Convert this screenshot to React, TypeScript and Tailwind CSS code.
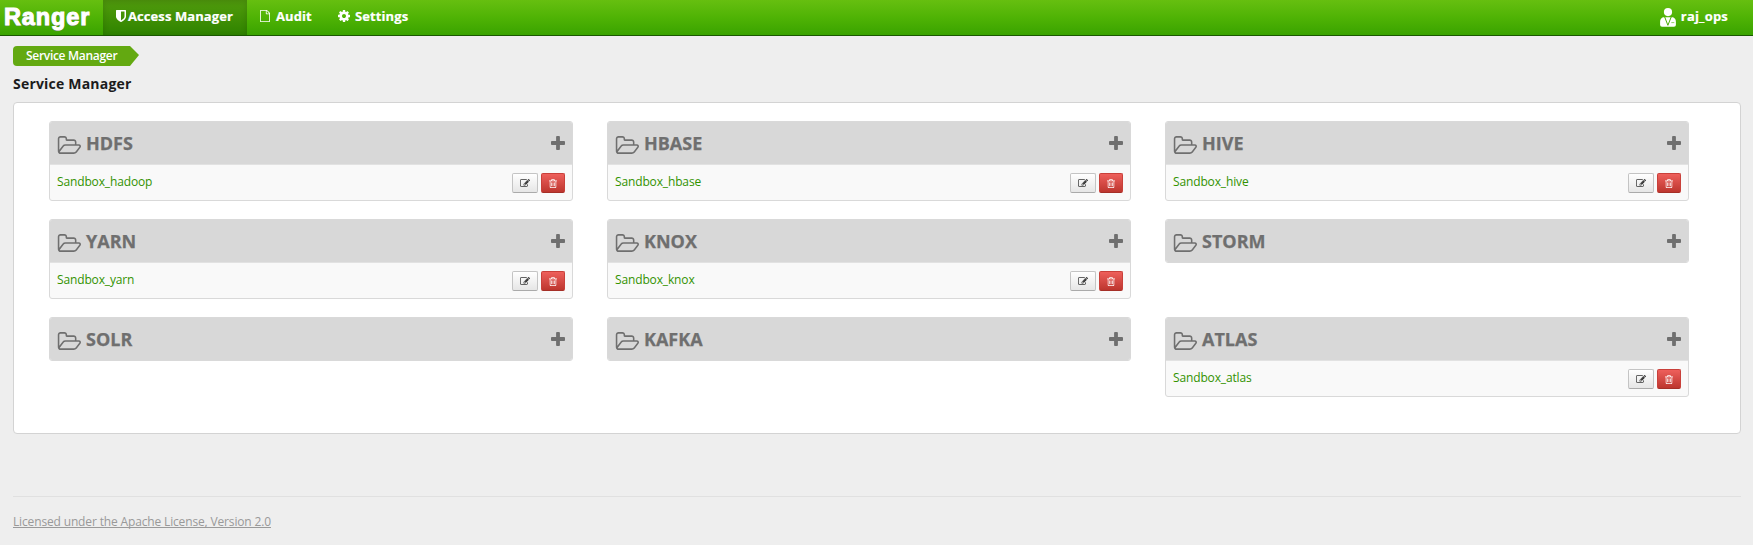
import React from "react";

const PATHS = {
  folder:
    "M1845 931q0-35-53-35h-1088q-40 0-85.500 21.500t-71.500 52.500l-294 363q-18 24-18 40 0 35 53 35h1088q40 0 86-22t71-53l294-363q18-22 18-39zm-1141-163h768v-160q0-40-28-68t-68-28h-576q-40 0-68-28t-28-68v-64q0-40-28-68t-68-28h-320q-40 0-68 28t-28 68v853l256-315q44-53 116-87.500t140-34.500zm1269 163q0 62-46 120l-295 363q-43 53-116 87.500t-140 34.500h-1088q-92 0-158-66t-66-158v-960q0-92 66-158t158-66h320q92 0 158 66t66 158v32h544q92 0 158 66t66 158v160h192q54 0 99 24.500t67 70.500q15 32 15 68z",
  plus: "M1600 736v192q0 40-28 68t-68 28h-416v416q0 40-28 68t-68 28h-192q-40 0-68-28t-28-68v-416h-416q-40 0-68-28t-28-68v-192q0-40 28-68t68-28h416v-416q0-40 28-68t68-28h192q40 0 68 28t28 68v416h416q40 0 68 28t28 68z",
  edit: "M888 1184l116-116-152-152-116 116v56h96v96h56zm440-720q-16-16-33 1l-350 350q-17 17-1 33t33-1l350-350q17-17 1-33zm80 594v190q0 119-84.500 203.500t-203.500 84.500h-832q-119 0-203.500-84.500t-84.500-203.500v-832q0-119 84.500-203.500t203.500-84.500h832q63 0 117 25 15 7 18 23 3 17-9 29l-49 49q-14 14-32 8-23-6-45-6h-832q-66 0-113 47t-47 113v832q0 66 47 113t113 47h832q66 0 113-47t47-113v-126q0-13 9-22l64-64q15-15 35-7t20 29zm-96-738l288 288-672 672h-288v-288zm444 132l-92 92-288-288 92-92q28-28 68-28t68 28l152 152q28 28 28 68t-28 68z",
  trash:
    "M704 736v576q0 14-9 23t-23 9h-64q-14 0-23-9t-9-23v-576q0-14 9-23t23-9h64q14 0 23 9t9 23zm256 0v576q0 14-9 23t-23 9h-64q-14 0-23-9t-9-23v-576q0-14 9-23t23-9h64q14 0 23 9t9 23zm256 0v576q0 14-9 23t-23 9h-64q-14 0-23-9t-9-23v-576q0-14 9-23t23-9h64q14 0 23 9t9 23zm128 724v-948h-896v948q0 22 7 40.500t14.500 27 10.500 8.500h832q3 0 10.500-8.500t14.500-27 7-40.500zm-672-1076h448l-48-117q-7-9-17-11h-317q-10 2-17 11zm928 32v64q0 14-9 23t-23 9h-96v948q0 83-47 143.500t-113 60.500h-832q-66 0-113-58.500t-47-141.500v-952h-96q-14 0-23-9t-9-23v-64q0-14 9-23t23-9h309l70-167q15-37 54-63t79-26h320q40 0 79 26t54 63l70 167h309q14 0 23 9t9 23z",
  cog: "M1152 896q0-106-75-181t-181-75-181 75-75 181 75 181 181 75 181-75 75-181zm512-109v222q0 12-8 23t-20 13l-185 28q-19 54-39 91 35 50 107 138 10 12 10 25t-9 23q-27 37-99 108t-94 71q-12 0-26-9l-138-108q-44 23-91 38-16 136-29 186-7 28-36 28h-222q-14 0-24.500-8.500t-11.500-21.500l-28-184q-49-16-90-37l-141 107q-10 9-25 9-14 0-25-11-126-114-165-168-7-10-7-23 0-12 8-23 15-21 51-66.500t54-70.500q-27-50-41-99l-183-27q-13-2-21-12.500t-8-23.500v-222q0-12 8-23t19-13l186-28q14-46 39-92-40-57-107-138-10-12-10-24 0-10 9-23 26-36 98.500-107.500t94.500-71.500q13 0 26 10l138 107q44-23 91-38 16-136 29-186 7-28 36-28h222q14 0 24.500 8.500t11.500 21.500l28 184q49 16 90 37l142-107q9-9 24-9 13 0 25 10 129 119 165 170 7 8 7 22 0 12-8 23-15 21-51 66.500t-54 70.500q26 50 41 98l183 28q13 2 21 12.500t8 23.500z",
  file: "M1596 380q28 28 48 76t20 88v1152q0 40-28 68t-68 28h-1344q-40 0-68-28t-28-68v-1600q0-40 28-68t68-28h896q40 0 88 20t76 48zm-444-244v376h376q-10-29-22-41l-313-313q-12-12-41-22zm384 1528v-1024h-416q-40 0-68-28t-28-68v-416h-768v1536h1280z",
  shield:
    "M1344 960v-640h-448v1137q119-63 213-137 235-184 235-360zm192-768v768q0 86-33.500 170.500t-83 150-118 127.500-126.500 103-121 77.500-89.500 49.500-42.500 20q-12 6-26 6t-26-6q-16-7-42.500-20t-89.500-49.500-121-77.500-126.500-103-118-127.500-83-150-33.500-170.500v-768q0-26 19-45t45-19h1152q26 0 45 19t19 45z",
};

function Icon({
  name,
  box,
  className,
}: {
  name: keyof typeof PATHS;
  box: string;
  className: string;
}) {
  return (
    <svg viewBox={box} preserveAspectRatio="none" fill="currentColor" className={`block shrink-0 ${className}`}>
      <path d={PATHS[name]} />
    </svg>
  );
}

function UserIcon() {
  return (
    <svg viewBox="0 0 16 19" className="block h-[19px] w-[16px] shrink-0">
      <circle cx="8" cy="4.1" r="4.1" fill="#fff" />
      <path d="M3 9.200H13Q15.900 10.200 15.900 14V17Q15.900 18.800 14 18.800H2Q.1 18.800 .1 17V14Q.1 10.200 3 9.200Z" fill="#fff" />
      <path d="M4.700 9L7.900 17.300L11.200 9" stroke="#4aae04" strokeWidth="1" fill="none" />
      <path d="M11.300 14.600H14.300" stroke="#4aae04" strokeWidth=".6" fill="none" />
    </svg>
  );
}

const SERVICES: { name: string; repo?: string }[] = [
  { name: "HDFS", repo: "Sandbox_hadoop" },
  { name: "HBASE", repo: "Sandbox_hbase" },
  { name: "HIVE", repo: "Sandbox_hive" },
  { name: "YARN", repo: "Sandbox_yarn" },
  { name: "KNOX", repo: "Sandbox_knox" },
  { name: "STORM" },
  { name: "SOLR" },
  { name: "KAFKA" },
  { name: "ATLAS", repo: "Sandbox_atlas" },
];

function ServiceCard({ name, repo }: { name: string; repo?: string }) {
  return (
    <section className="overflow-hidden rounded-[3px] border border-[#d9d9d9] bg-[#f9f9f9]">
      <div className="flex h-[42px] items-center bg-[#d8d8d8] px-[7px] text-[#6f6f6f]">
        <Icon name="folder" box="0 128 1973 1408" className="mt-[4px] h-[18px] w-[24px]" />
        <h3 className="ml-[5px] text-[18px] leading-[42px] font-bold [-webkit-text-stroke:0.25px_#6f6f6f]">{name}</h3>
        <Icon name="plus" box="192 128 1408 1408" className="ml-auto h-[14px] w-[14px]" />
      </div>
      {repo && (
        <div className="flex h-[36px] justify-between border-t border-[#e2e2e2] px-[7px]">
          <a className="mt-[7px] text-[12px] leading-[20px] tracking-[-0.14px] text-[#329200]">{repo}</a>
          <div className="mt-[8px] flex gap-[3px]">
            <button className="flex h-[20px] w-[26px] items-center justify-center rounded-[2px] border border-[#c4c4c4] border-b-[#aaa] bg-linear-to-b from-white to-[#e6e6e6] text-[#333]">
              <Icon name="edit" box="0 128 1792 1408" className="h-[8px] w-[10px]" />
            </button>
            <button className="flex h-[20px] w-[24px] items-center justify-center rounded-[2px] border border-[#c9403a] border-b-[#a52f27] bg-linear-to-b from-[#ee5f5b] to-[#bd362f] text-white">
              <Icon name="trash" box="192 128 1408 1536" className="h-[9px] w-[8px]" />
            </button>
          </div>
        </div>
      )}
    </section>
  );
}

export default function App() {
  return (
    <div className="h-[545px] overflow-hidden bg-[#eeeeee] font-['Open_Sans',sans-serif]">
      <header className="flex h-[36px] border-b border-[#1a5800] bg-linear-to-b from-[#66bf10] via-[#4fb305] to-[#39a300] text-[13px] leading-[33px] font-bold tracking-[0.08px] text-white [-webkit-text-stroke:0.2px_white]">
        <div className="w-[103px] pl-[4px] font-['Liberation_Sans',sans-serif] text-[23.5px] leading-[35px] tracking-[0.9px] [-webkit-text-stroke:1px_white] [text-shadow:0_1px_1px_#777]">
          Ranger
        </div>
        <nav className="flex">
          <a className="flex w-[144px] bg-linear-to-b from-[#519c0d] to-[#2e8300] pl-[13px] shadow-[inset_0_2px_6px_rgba(0,0,0,0.15)]">
            <Icon name="shield" box="256 128 1280 1536" className="mt-[10px] h-[12px] w-[10px]" />
            <span className="ml-[2px]">Access Manager</span>
          </a>
          <a className="flex pl-[13px]">
            <Icon name="file" box="128 0 1536 1792" className="mt-[10px] h-[12px] w-[10px]" />
            <span className="ml-[6px] w-[36px]">Audit</span>
          </a>
          <a className="flex pl-[26px]">
            <Icon name="cog" box="128 128 1536 1536" className="mt-[10px] h-[12px] w-[12px]" />
            <span className="ml-[5px] tracking-[0.1px]">Settings</span>
          </a>
        </nav>
        <div className="mr-[25px] ml-auto flex">
          <div className="mt-[8px]">
            <UserIcon />
          </div>
          <span className="ml-[5px] tracking-[0.2px]">raj_ops</span>
        </div>
      </header>

      <main className="pr-[12px] pl-[13px]">
        <div className="mt-[10px] flex h-[20px] w-[126px] rounded-l-[4px] bg-[#63a911] pl-[13px] text-[12px] leading-[19px] font-semibold tracking-[-0.3px] whitespace-nowrap text-white [clip-path:polygon(0_0,117px_0,126px_9px,117px_20px,0_20px)]">
          Service Manager
        </div>
        <h1 className="mt-[8px] h-[28px] text-[14px] leading-[20px] font-bold tracking-[0.2px] text-[#1c1c1c]">Service Manager</h1>
        <div className="h-[332px] rounded-[4px] border border-[#d3d3d3] bg-white pt-[18px] pl-[35px]">
          <div className="grid grid-cols-[repeat(3,524px)] grid-rows-[80px_80px_80px] items-start gap-x-[34px] gap-y-[18px]">
            {SERVICES.map((s) => (
              <ServiceCard key={s.name} name={s.name} repo={s.repo} />
            ))}
          </div>
        </div>
      </main>

      <footer className="mr-[12px] ml-[13px] mt-[62px] border-t border-[#e0e0e0] pt-[16px] text-[12px] leading-[18px] tracking-[-0.15px] text-[#999]">
        <a className="underline [text-decoration-skip-ink:none]">Licensed under the Apache License, Version 2.0</a>
      </footer>
    </div>
  );
}
